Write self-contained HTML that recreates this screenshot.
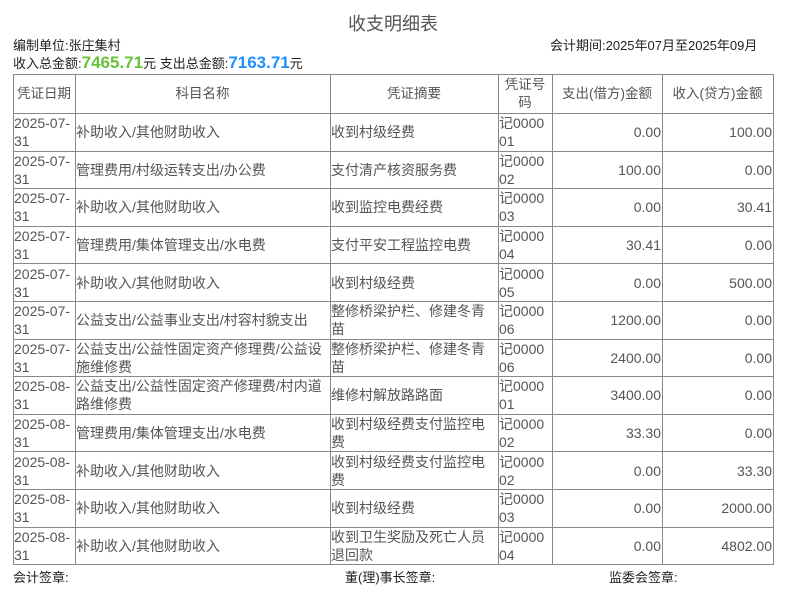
<!DOCTYPE html>
<html><head><meta charset="utf-8"><style>
body{margin:0;background:#fff;font-family:"Liberation Sans","Noto Sans CJK SC",sans-serif;font-size:13px;color:#222;width:786px;height:592px;overflow:hidden;position:relative}
.t{position:absolute;left:0;width:786px;top:10px;text-align:center;font-size:18px;color:#555}
.a{position:absolute;font-size:13px;color:#222;white-space:nowrap}
table{position:absolute;left:13px;top:74px;width:760px;border-collapse:collapse;table-layout:fixed}
td,th{border:1px solid #888;padding:0 1px 0 0;color:#555;font-weight:normal;font-size:14px;line-height:18px;vertical-align:middle;overflow:hidden;word-break:break-all}
th{height:38px;text-align:center;font-size:13.5px}
tr.r td{height:36.6px}
td.n{text-align:right}
</style></head><body>
<div class="t">收支明细表</div>
<div class="a" style="left:13px;top:35px">编制单位:张庄集村</div>
<div class="a" style="left:550px;top:35px">会计期间:2025年07月至2025年09月</div>
<div class="a" style="left:13px;top:53px">收入总金额:<b style="color:#67c23a;font-size:17px">7465.71</b>元 支出总金额:<b style="color:#1e90ff;font-size:17px">7163.71</b>元</div>
<table>
<colgroup><col style="width:62px"><col style="width:255px"><col style="width:168px"><col style="width:54px"><col style="width:110px"><col style="width:111px"></colgroup>
<tr><th>凭证日期</th><th>科目名称</th><th>凭证摘要</th><th>凭证号码</th><th>支出(借方)金额</th><th>收入(贷方)金额</th></tr>
<tr class="r"><td>2025-07-31</td><td>补助收入/其他财助收入</td><td>收到村级经费</td><td>记000001</td><td class="n">0.00</td><td class="n">100.00</td></tr>
<tr class="r"><td>2025-07-31</td><td>管理费用/村级运转支出/办公费</td><td>支付清产核资服务费</td><td>记000002</td><td class="n">100.00</td><td class="n">0.00</td></tr>
<tr class="r"><td>2025-07-31</td><td>补助收入/其他财助收入</td><td>收到监控电费经费</td><td>记000003</td><td class="n">0.00</td><td class="n">30.41</td></tr>
<tr class="r"><td>2025-07-31</td><td>管理费用/集体管理支出/水电费</td><td>支付平安工程监控电费</td><td>记000004</td><td class="n">30.41</td><td class="n">0.00</td></tr>
<tr class="r"><td>2025-07-31</td><td>补助收入/其他财助收入</td><td>收到村级经费</td><td>记000005</td><td class="n">0.00</td><td class="n">500.00</td></tr>
<tr class="r"><td>2025-07-31</td><td>公益支出/公益事业支出/村容村貌支出</td><td>整修桥梁护栏、修建冬青苗</td><td>记000006</td><td class="n">1200.00</td><td class="n">0.00</td></tr>
<tr class="r"><td>2025-07-31</td><td>公益支出/公益性固定资产修理费/公益设施维修费</td><td>整修桥梁护栏、修建冬青苗</td><td>记000006</td><td class="n">2400.00</td><td class="n">0.00</td></tr>
<tr class="r"><td>2025-08-31</td><td>公益支出/公益性固定资产修理费/村内道路维修费</td><td>维修村解放路路面</td><td>记000001</td><td class="n">3400.00</td><td class="n">0.00</td></tr>
<tr class="r"><td>2025-08-31</td><td>管理费用/集体管理支出/水电费</td><td>收到村级经费支付监控电费</td><td>记000002</td><td class="n">33.30</td><td class="n">0.00</td></tr>
<tr class="r"><td>2025-08-31</td><td>补助收入/其他财助收入</td><td>收到村级经费支付监控电费</td><td>记000002</td><td class="n">0.00</td><td class="n">33.30</td></tr>
<tr class="r"><td>2025-08-31</td><td>补助收入/其他财助收入</td><td>收到村级经费</td><td>记000003</td><td class="n">0.00</td><td class="n">2000.00</td></tr>
<tr class="r"><td>2025-08-31</td><td>补助收入/其他财助收入</td><td>收到卫生奖励及死亡人员退回款</td><td>记000004</td><td class="n">0.00</td><td class="n">4802.00</td></tr>
</table>
<div class="a" style="left:13px;top:567px">会计签章:</div>
<div class="a" style="left:345px;top:567px">董(理)事长签章:</div>
<div class="a" style="left:609px;top:567px">监委会签章:</div>
</body></html>
